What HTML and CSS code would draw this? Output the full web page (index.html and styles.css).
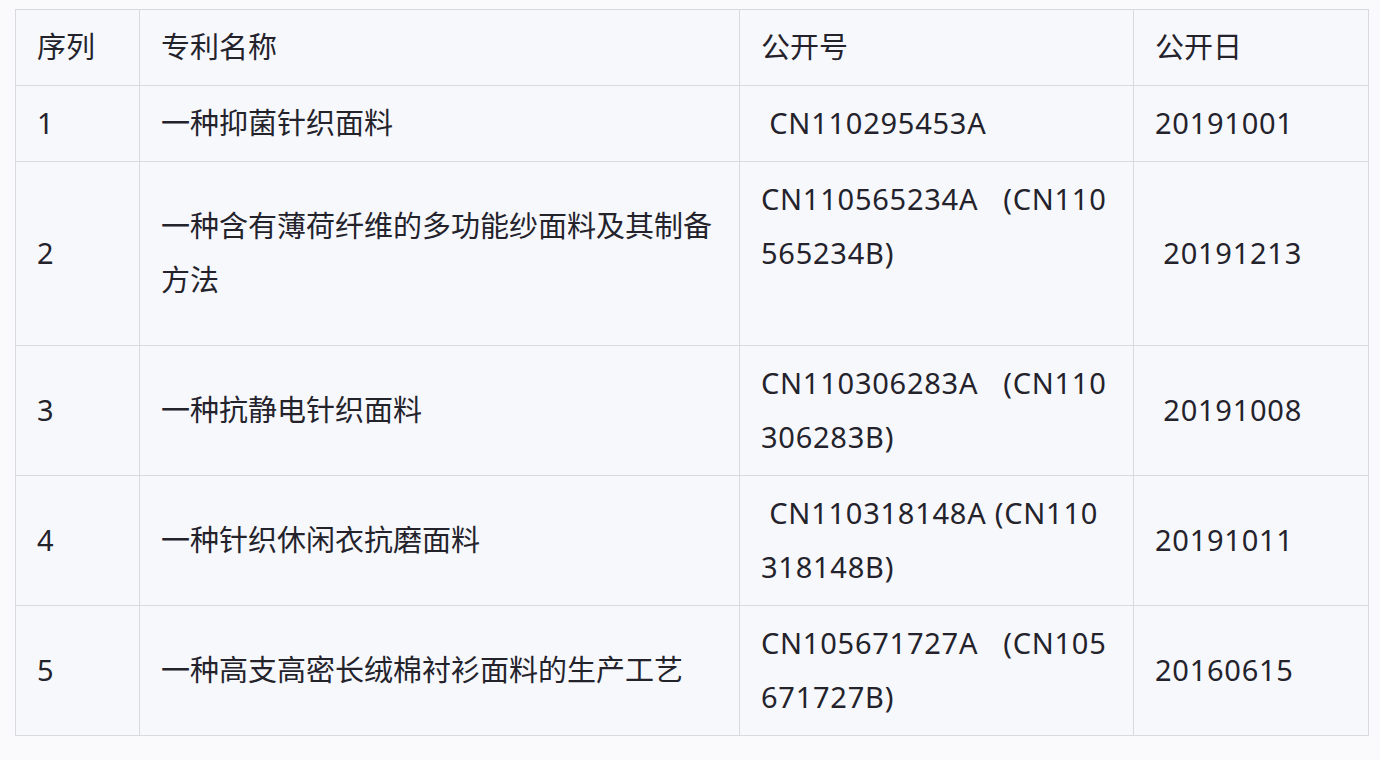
FILE: index.html
```html
<!DOCTYPE html>
<html lang="zh-CN">
<head>
<meta charset="utf-8">
<title>专利列表</title>
<link rel="stylesheet" href="styles.css">
</head>
<body>
<div class="page">
  <table class="patents">
    <colgroup>
      <col class="c-no">
      <col class="c-name">
      <col class="c-pub">
      <col class="c-date">
    </colgroup>
    <tbody>
      <tr>
        <td>序列</td>
        <td>专利名称</td>
        <td>公开号</td>
        <td>公开日</td>
      </tr>
      <tr>
        <td class="num">1</td>
        <td>一种抑菌针织面料</td>
        <td class="code">&nbsp;CN110295453A</td>
        <td class="num">20191001</td>
      </tr>
      <tr>
        <td class="num">2</td>
        <td>一种含有薄荷纤维的多功能纱面料及其制备方法</td>
        <td class="code">CN110565234A<span class="fp">(</span>CN110<br>565234B)<br>&nbsp;</td>
        <td class="num">&nbsp;20191213</td>
      </tr>
      <tr>
        <td class="num">3</td>
        <td>一种抗静电针织面料</td>
        <td class="code">CN110306283A<span class="fp">(</span>CN110<br>306283B)</td>
        <td class="num">&nbsp;20191008</td>
      </tr>
      <tr>
        <td class="num">4</td>
        <td>一种针织休闲衣抗磨面料</td>
        <td class="code">&nbsp;CN110318148A (CN110<br>318148B)</td>
        <td class="num">20191011</td>
      </tr>
      <tr>
        <td class="num">5</td>
        <td>一种高支高密长绒棉衬衫面料的生产工艺</td>
        <td class="code">CN105671727A<span class="fp">(</span>CN105<br>671727B)</td>
        <td class="num">20160615</td>
      </tr>
    </tbody>
  </table>
</div>
</body>
</html>
```
FILE: styles.css
```css
html, body {
  margin: 0;
  padding: 0;
  background: #fafafc;
}
.page {
  padding: 9px 13px 0 15px;
}
.patents {
  border-collapse: collapse;
  table-layout: fixed;
  width: 1353px;
  font-family: "Noto Sans", "Noto Sans CJK SC", sans-serif;
  font-size: 29px;
  color: #24232c;
}
.c-no { width: 124px; }
.c-name { width: 600px; }
.c-pub { width: 394px; }
.c-date { width: 235px; }
.patents td {
  border: 1px solid #d9d9e0;
  background: #f7f8fc;
  padding: 10px 21px 11px 21px;
  line-height: 54px;
  vertical-align: middle;
  text-align: left;
}
.patents td.code {
  white-space: nowrap;
  letter-spacing: 0.75px;
}
.patents td.num {
  letter-spacing: 0.75px;
}
.fp {
  margin-left: 25px;
}
```
